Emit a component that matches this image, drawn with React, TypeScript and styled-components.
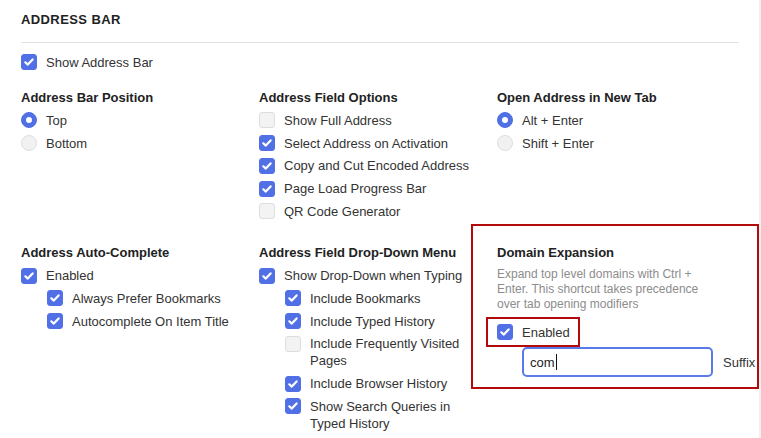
import React from "react";
import styled, { createGlobalStyle } from "styled-components";

const GlobalStyle = createGlobalStyle`
  html, body { margin: 0; padding: 0; background: #fff; }
  body { font-family: "Liberation Sans", Arial, sans-serif; }
  * { box-sizing: border-box; }
`;

const BLUE = "#5170e6";
const RED = "#b30b0b";

const Page = styled.div`
  width: 761px;
  min-height: 438px;
  padding: 11.5px 20px 0 21px;
  border-right: 2px solid #f0f0f0;
  color: #333;
  font-size: 13px;
  line-height: 17px;
  overflow: hidden;
`;

const Title = styled.h1`
  margin: 0;
  font-size: 13px;
  line-height: 15px;
  font-weight: bold;
  letter-spacing: 0.4px;
  color: #222;
`;

const Divider = styled.hr`
  margin: 15.5px 0 10.5px;
  border: 0;
  border-top: 1px solid #e2e2e2;
`;

const Grid = styled.div`
  display: grid;
  grid-template-columns: 238px 238px minmax(0, 1fr);
  row-gap: 24px;
  margin-top: 18px;
`;

const Column = styled.div`
  display: flex;
  flex-direction: column;
  gap: 5.75px;
  padding-right: 20px;
  position: relative;
  align-self: start;
  min-width: 0;
`;

const Heading = styled.h2`
  margin: 0 0 0.5px;
  font-size: 13px;
  line-height: 17px;
  font-weight: bold;
  color: #222;
`;

const Option = styled.label`
  display: flex;
  align-items: flex-start;
  gap: 9px;
  color: #333;
`;

const Box = styled.span<{ $on?: boolean }>`
  flex: none;
  width: 16px;
  height: 16px;
  margin-top: 0.5px;
  border-radius: 3px;
  display: flex;
  align-items: center;
  justify-content: center;
  background: ${(p) => (p.$on ? BLUE : "#f3f3f3")};
  border: 1px solid ${(p) => (p.$on ? BLUE : "#dedede")};
`;

const Radio = styled.span<{ $on?: boolean }>`
  flex: none;
  width: 16px;
  height: 16px;
  margin-top: 0.5px;
  border-radius: 50%;
  display: flex;
  align-items: center;
  justify-content: center;
  background: ${(p) => (p.$on ? BLUE : "#f1f1f1")};
  border: 1px solid ${(p) => (p.$on ? BLUE : "#dedede")};
  &::after {
    content: "";
    width: 6px;
    height: 6px;
    border-radius: 50%;
    background: #fff;
    display: ${(p) => (p.$on ? "block" : "none")};
  }
`;

const Sub = styled.div`
  display: flex;
  flex-direction: column;
  gap: 5.75px;
  padding-left: 26px;
`;

const Description = styled.p`
  margin: 0;
  max-width: 212px;
  font-size: 12px;
  line-height: 15px;
  color: #8c8c8c;
`;

const DomainCell = styled(Column)`
  gap: 0;
  padding-right: 0;
  &::after {
    content: "";
    position: absolute;
    top: -19.5px;
    left: -26.5px;
    right: -20px;
    bottom: -12px;
    border: 2px solid ${RED};
    pointer-events: none;
  }
  ${Heading} {
    margin-bottom: 0;
  }
  ${Description} {
    margin-top: 6px;
  }
`;

const EnabledRow = styled(Option)`
  position: relative;
  align-self: flex-start;
  margin-top: 12px;
  &::after {
    content: "";
    position: absolute;
    top: -6.5px;
    bottom: -6.5px;
    left: -11px;
    right: -10px;
    border: 2px solid ${RED};
    pointer-events: none;
  }
`;

const InputRow = styled.div`
  display: flex;
  align-items: center;
  gap: 10px;
  margin-top: 6.5px;
  margin-left: 25px;
  white-space: nowrap;
`;

const Field = styled.div`
  flex: none;
  width: 191px;
  height: 30px;
  border: 2px solid #5a7ae8;
  border-radius: 5px;
  padding: 0 6px;
  display: flex;
  align-items: center;
  font-size: 13px;
  color: #222;
`;

const Caret = styled.span`
  display: inline-block;
  width: 1px;
  height: 16px;
  background: #111;
  margin-left: 1px;
`;

const Suffix = styled.span`
  color: #333;
`;

const CheckMark = () => (
  <svg width="12" height="12" viewBox="0 0 12 12" aria-hidden>
    <path
      d="M2.3 6.3 L4.8 8.6 L9.6 3.4"
      stroke="#fff"
      strokeWidth="2.2"
      fill="none"
      strokeLinecap="round"
      strokeLinejoin="round"
    />
  </svg>
);

const Check = ({ on, children }: { on?: boolean; children: React.ReactNode }) => (
  <Option>
    <Box $on={on}>{on && <CheckMark />}</Box>
    <span>{children}</span>
  </Option>
);

const RadioOpt = ({ on, children }: { on?: boolean; children: React.ReactNode }) => (
  <Option>
    <Radio $on={on} />
    <span>{children}</span>
  </Option>
);

export default function App() {
  return (
    <>
      <GlobalStyle />
      <Page>
        <Title>ADDRESS BAR</Title>
        <Divider />
        <Check on>Show Address Bar</Check>
        <Grid>
          <Column>
            <Heading>Address Bar Position</Heading>
            <RadioOpt on>Top</RadioOpt>
            <RadioOpt>Bottom</RadioOpt>
          </Column>
          <Column>
            <Heading>Address Field Options</Heading>
            <Check>Show Full Address</Check>
            <Check on>Select Address on Activation</Check>
            <Check on>Copy and Cut Encoded Address</Check>
            <Check on>Page Load Progress Bar</Check>
            <Check>QR Code Generator</Check>
          </Column>
          <Column>
            <Heading>Open Address in New Tab</Heading>
            <RadioOpt on>Alt + Enter</RadioOpt>
            <RadioOpt>Shift + Enter</RadioOpt>
          </Column>

          <Column>
            <Heading>Address Auto-Complete</Heading>
            <Check on>Enabled</Check>
            <Sub>
              <Check on>Always Prefer Bookmarks</Check>
              <Check on>Autocomplete On Item Title</Check>
            </Sub>
          </Column>
          <Column>
            <Heading>Address Field Drop-Down Menu</Heading>
            <Check on>Show Drop-Down when Typing</Check>
            <Sub>
              <Check on>Include Bookmarks</Check>
              <Check on>Include Typed History</Check>
              <Check>Include Frequently Visited Pages</Check>
              <Check on>Include Browser History</Check>
              <Check on>Show Search Queries in Typed History</Check>
            </Sub>
          </Column>
          <DomainCell>
            <Heading>Domain Expansion</Heading>
            <Description>
              Expand top level domains with Ctrl + Enter. This shortcut takes precedence over tab opening
              modifiers
            </Description>
            <EnabledRow>
              <Box $on>
                <CheckMark />
              </Box>
              <span>Enabled</span>
            </EnabledRow>
            <InputRow>
              <Field>
                com
                <Caret />
              </Field>
              <Suffix>Suffix</Suffix>
            </InputRow>
          </DomainCell>
        </Grid>
      </Page>
    </>
  );
}
